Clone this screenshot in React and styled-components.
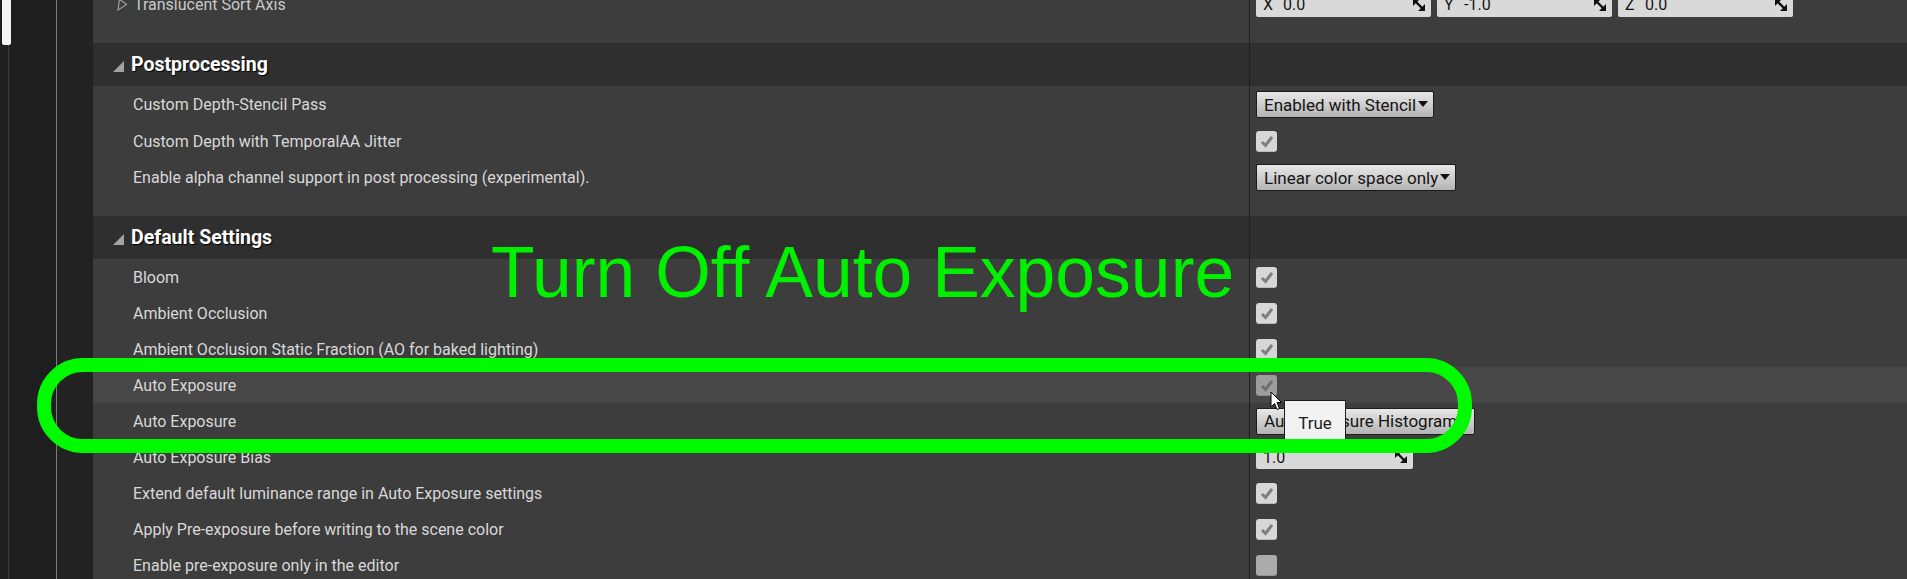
import React from 'react';
import styled, { createGlobalStyle } from 'styled-components';

const GlobalStyle = createGlobalStyle`
  html, body { margin: 0; padding: 0; background: #3d3d3d; overflow: hidden; }
  body { font-family: Roboto, "Noto Sans", sans-serif; }
  * { box-sizing: border-box; }
`;

const Screen = styled.div`
  position: relative;
  width: 1907px;
  height: 579px;
  display: flex;
  overflow: hidden;
  background: #3d3d3d;
`;

const Gutter = styled.div`
  flex: none;
  width: 93px;
  display: flex;
  background: #1e1e1e;
`;

const ScrollTrack = styled.div`
  width: 56px;
  display: flex;
  flex-direction: column;
  padding-left: 2px;
`;

const ScrollThumb = styled.div`
  width: 9px;
  height: 45px;
  background: #f4f4f4;
  border-radius: 0 0 2px 2px;
`;

const ScrollRail = styled.div`
  flex: 1;
  width: 1px;
  margin-left: 6px;
  background: #3a3a3a;
`;

const GutterLine = styled.div`
  width: 1px;
  background: #7c7c7c;
`;

const GutterFill = styled.div`
  flex: 1;
  background: #222222;
`;

const Panel = styled.div`
  flex: 1;
  display: flex;
  flex-direction: column;
  overflow: hidden;
`;

const Scrolled = styled.div`
  margin-top: -14px;
  display: flex;
  flex-direction: column;
`;

const Row = styled.div`
  display: grid;
  grid-template-columns: 1156px 1fr;
  height: ${(p) => p.$h || 36}px;
  background: ${(p) => (p.$hover ? '#474747' : '#3d3d3d')};
`;

const HeaderRow = styled(Row)`
  height: 43px;
  background: #2f2f2f;
`;

const Spacer = styled(Row)`
  height: 20px;
`;

const NameCell = styled.div`
  display: flex;
  align-items: center;
  padding-left: ${(p) => p.$indent ?? 40}px;
  color: #d8d8d8;
  font-size: 16px;
  white-space: nowrap;
`;

const SubLabel = styled.span`
  margin-left: 6px;
  color: #c9c9c9;
`;

const HeaderName = styled.div`
  display: flex;
  align-items: center;
  gap: 7px;
  padding-left: 20px;
  color: #ffffff;
  font-size: 19.5px;
  font-weight: 700;
  text-shadow: 1px 1px 1px #000;
  white-space: nowrap;
`;

const ValueCell = styled.div`
  display: flex;
  align-items: center;
  gap: 6px;
  padding-left: 6px;
  border-left: 1px solid #1f1f1f;
`;

const Dropdown = styled.div`
  display: inline-flex;
  align-items: center;
  gap: 2px;
  height: 27px;
  padding: 0 5px 0 7px;
  background: linear-gradient(#e8e8e8, #c9c9c9 60%, #b3b3b3);
  border: 1px solid #1c1c1c;
  border-radius: 2px;
  color: #141414;
  font-size: 17px;
  white-space: nowrap;
`;

const NumField = styled.div`
  display: flex;
  align-items: center;
  justify-content: space-between;
  width: ${(p) => p.$w}px;
  height: 24px;
  padding: 0 6px 0 7px;
  background: #d9d9d9;
  border-radius: 2px;
  color: #151515;
  font-size: 16px;
`;

const AxisLabel = styled.span`
  display: inline-block;
  width: 20px;
`;

const FieldText = styled.span`
  display: flex;
  align-items: center;
`;

const Box = styled.span`
  display: inline-flex;
  align-items: center;
  justify-content: center;
  width: 21px;
  height: 21px;
  border-radius: 3px;
  background: ${(p) => (p.$dim ? '#9d9d9d' : p.$checked ? '#d7d7d7' : '#ababab')};
  box-shadow: inset 0 -1px 0 rgba(0, 0, 0, 0.12);
`;

const Annotation = styled.div`
  position: absolute;
  left: 491px;
  top: 237px;
  font-family: "Liberation Sans", Arial, sans-serif;
  font-size: 71.5px;
  line-height: 1;
  color: #00f000;
  white-space: nowrap;
  pointer-events: none;
`;

const Ring = styled.div`
  position: absolute;
  left: 37px;
  top: 358px;
  width: 1435px;
  height: 95px;
  border: 14px solid #00fa00;
  border-radius: 46px;
  pointer-events: none;
`;

const Tooltip = styled.div`
  position: absolute;
  left: 1284px;
  top: 400px;
  width: 62px;
  height: 40px;
  display: flex;
  align-items: center;
  justify-content: center;
  padding-top: 5px;
  background: #f2f2f2;
  border: 1px solid #1a1a1a;
  border-bottom: none;
  color: #1c1c1c;
  font-size: 17px;
`;

const Cursor = styled.svg`
  position: absolute;
  left: 1270px;
  top: 391px;
`;

const Caret = () => (
  <svg width="10" height="7" viewBox="0 0 10 7">
    <polygon points="0,0 10,0 5,6" fill="#111" />
  </svg>
);

const HeaderArrow = () => (
  <svg width="11" height="11" viewBox="0 0 11 11" style={{ marginTop: 3 }}>
    <polygon points="11,0 11,11 0,11" fill="#a3a3a3" />
  </svg>
);

const Collapsed = () => (
  <svg width="11" height="13" viewBox="0 0 11 13">
    <polygon points="2.5,1 9.5,6.5 1,12" fill="none" stroke="#9a9a9a" strokeWidth="1.2" />
  </svg>
);

const Drag = () => (
  <svg width="12" height="12" viewBox="0 0 12 12">
    <polygon points="0,0 7,0 0,7" fill="#111" />
    <polygon points="12,12 5,12 12,5" fill="#111" />
    <line x1="1" y1="1" x2="11" y2="11" stroke="#111" strokeWidth="2.4" />
  </svg>
);

const Check = ({ checked, dim }) => (
  <Box $checked={checked} $dim={dim}>
    {checked && (
      <svg width="14" height="13" viewBox="0 0 14 13">
        <path d="M2 7 L5.5 10.5 L12 2" fill="none" stroke={dim ? '#707070' : '#7e7e7e'} strokeWidth="3" />
      </svg>
    )}
  </Box>
);

const Select = ({ children }) => (
  <Dropdown>
    {children}
    <Caret />
  </Dropdown>
);

const Vec = ({ axis, value }) => (
  <NumField $w={175}>
    <FieldText>
      <AxisLabel>{axis}</AxisLabel>
      {value}
    </FieldText>
    <Drag />
  </NumField>
);

const Prop = ({ label, children, h, hover }) => (
  <Row $h={h} $hover={hover}>
    <NameCell>{label}</NameCell>
    <ValueCell>{children}</ValueCell>
  </Row>
);

const Category = ({ title }) => (
  <HeaderRow>
    <HeaderName>
      <HeaderArrow />
      {title}
    </HeaderName>
    <ValueCell />
  </HeaderRow>
);

const End = () => (
  <Spacer>
    <div />
    <ValueCell />
  </Spacer>
);

export default function App() {
  return (
    <>
      <GlobalStyle />
      <Screen>
        <Gutter>
          <ScrollTrack>
            <ScrollThumb />
            <ScrollRail />
          </ScrollTrack>
          <GutterLine />
          <GutterFill />
        </Gutter>
        <Panel>
          <Scrolled>
            <Row $h={37}>
              <NameCell $indent={24}>
                <Collapsed />
                <SubLabel>Translucent Sort Axis</SubLabel>
              </NameCell>
              <ValueCell>
                <Vec axis="X" value="0.0" />
                <Vec axis="Y" value="-1.0" />
                <Vec axis="Z" value="0.0" />
              </ValueCell>
            </Row>
            <End />

            <Category title="Postprocessing" />
            <Prop label="Custom Depth-Stencil Pass" h={37}>
              <Select>Enabled with Stencil</Select>
            </Prop>
            <Prop label="Custom Depth with TemporalAA Jitter">
              <Check checked />
            </Prop>
            <Prop label="Enable alpha channel support in post processing (experimental)." h={37}>
              <Select>Linear color space only</Select>
            </Prop>
            <End />

            <Category title="Default Settings" />
            <Prop label="Bloom"><Check checked /></Prop>
            <Prop label="Ambient Occlusion"><Check checked /></Prop>
            <Prop label="Ambient Occlusion Static Fraction (AO for baked lighting)"><Check checked /></Prop>
            <Prop label="Auto Exposure" hover><Check checked dim /></Prop>
            <Prop label="Auto Exposure">
              <Select>Auto Exposure Histogram</Select>
            </Prop>
            <Prop label="Auto Exposure Bias">
              <NumField $w={157}>
                <span>1.0</span>
                <Drag />
              </NumField>
            </Prop>
            <Prop label="Extend default luminance range in Auto Exposure settings"><Check checked /></Prop>
            <Prop label="Apply Pre-exposure before writing to the scene color"><Check checked /></Prop>
            <Prop label="Enable pre-exposure only in the editor"><Check /></Prop>
          </Scrolled>
        </Panel>

        <Annotation>Turn Off Auto Exposure</Annotation>
        <Tooltip>True</Tooltip>
        <Cursor width="13" height="20" viewBox="0 0 13 20">
          <path d="M1 1 L1 16 L4.5 12.5 L7 18.5 L9.5 17.5 L7 11.5 L11.5 11.5 Z" fill="#fff" stroke="#000" strokeWidth="1" />
        </Cursor>
        <Ring />
      </Screen>
    </>
  );
}
